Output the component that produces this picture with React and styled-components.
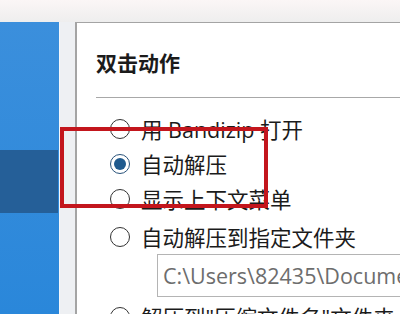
import React from "react";
import styled, { createGlobalStyle } from "styled-components";

const GlobalStyle = createGlobalStyle`
  html, body {
    margin: 0;
    padding: 0;
    background: #f3f3f3;
  }
  body {
    font-family: "Open Sans", "Noto Sans CJK SC", sans-serif;
  }
`;

const options = [
  { label: "用 Bandizip 打开" },
  { label: "自动解压", checked: true },
  { label: "显示上下文菜单" },
  { label: "自动解压到指定文件夹" },
];

export default function App() {
  return (
    <>
      <GlobalStyle />
      <Frame>
        <TopBar />
        <Body>
          <Sidebar>
            <SideItem $active />
          </Sidebar>
          <Gutter />
          <Panel>
            <Heading>双击动作</Heading>
            <Divider />
            <Options>
              {options.map(({ label, checked }) => (
                <Option key={label}>
                  <Radio $checked={checked} />
                  <span>{label}</span>
                </Option>
              ))}
              <PathBox>C:\Users\82435\Documents\Bandizip</PathBox>
              <Option $tight>
                <Radio />
                <span>解压到"压缩文件名"文件夹</span>
              </Option>
            </Options>
          </Panel>
        </Body>
        <Highlight />
      </Frame>
    </>
  );
}

const Frame = styled.div`
  position: relative;
  width: 400px;
  height: 314px;
  overflow: hidden;
  background: #f3f3f3;
`;

const TopBar = styled.div`
  height: 22px;
  background: linear-gradient(#fbf6f6, #eeeeee);
`;

const Body = styled.div`
  display: flex;
  height: 292px;
`;

const Sidebar = styled.div`
  flex: none;
  width: 60px;
  padding-top: 128px;
  display: flex;
  flex-direction: column;
  background: linear-gradient(#3b8fdc, #2a87da);
  border-right: 1px solid #f4f7fb;
  box-sizing: border-box;
`;

const SideItem = styled.div`
  width: 58px;
  height: 63px;
  background: ${(p) => (p.$active ? "#255f98" : "transparent")};
`;

const Gutter = styled.div`
  flex: none;
  width: 15px;
  background: #eef0f3;
`;

const Panel = styled.div`
  flex: 1;
  min-width: 0;
  background: #ffffff;
  border-left: 2px solid #a4a4a4;
  border-top: 1px solid #a4a4a4;
  padding: 26px 0 0 19px;
  color: #1b1b1b;
`;

const Heading = styled.div`
  font-size: 21px;
  font-weight: 700;
  line-height: 28px;
  white-space: nowrap;
`;

const Divider = styled.div`
  margin-top: 20px;
  height: 1px;
  background: #a8a8a8;
`;

const Options = styled.div`
  display: flex;
  flex-direction: column;
  padding: 13px 0 0 14px;
`;

const Option = styled.label`
  display: flex;
  align-items: center;
  gap: 11px;
  height: 35px;
  margin-top: ${(p) => (p.$tight ? "2px" : "0")};
  font-size: 21.5px;
  white-space: nowrap;
  &:nth-child(4) {
    margin-top: 3px;
  }
`;

const Radio = styled.span`
  position: relative;
  flex: none;
  width: 20px;
  height: 20px;
  box-sizing: border-box;
  border-radius: 50%;
  border: 1.5px solid ${(p) => (p.$checked ? "#28527a" : "#333333")};
  background: #ffffff;
  &::after {
    content: "";
    display: ${(p) => (p.$checked ? "block" : "none")};
    position: absolute;
    inset: 3px;
    border-radius: 50%;
    background: #1f5a8e;
  }
`;

const PathBox = styled.div`
  margin-left: 47px;
  height: 43px;
  box-sizing: border-box;
  border: 1px solid #b4b4b4;
  border-right: none;
  background: #ffffff;
  padding-left: 5px;
  display: flex;
  align-items: center;
  font-size: 21.5px;
  color: #6d6d6d;
  white-space: nowrap;
  overflow: hidden;
`;

const Highlight = styled.div`
  position: absolute;
  left: 60px;
  top: 127px;
  width: 208px;
  height: 81px;
  box-sizing: border-box;
  border: 4px solid #c3161d;
`;
